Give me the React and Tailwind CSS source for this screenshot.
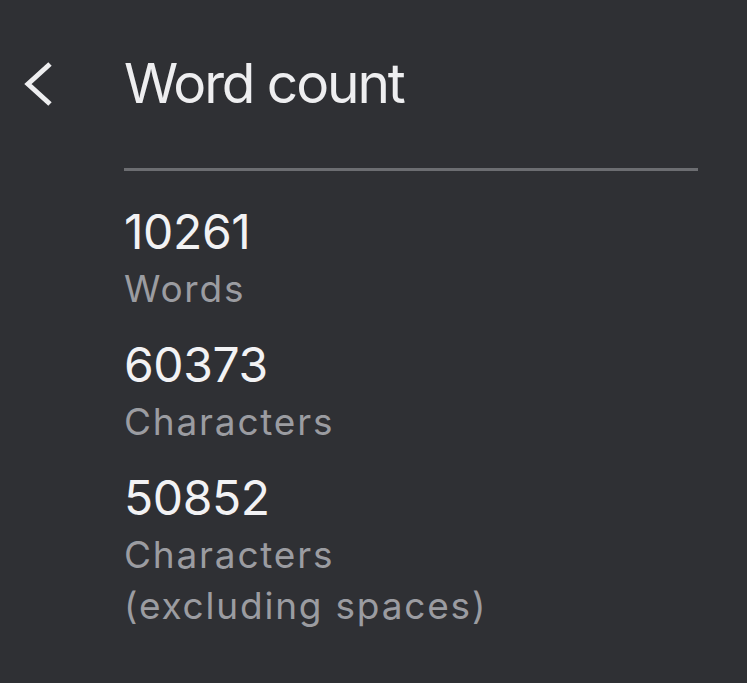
export default function App() {
  const rows = [
    { n: "10261", l: ["Words"] },
    { n: "60373", l: ["Characters"] },
    { n: "50852", l: ["Characters", "(excluding spaces)"] },
  ];
  return (
    <div className="w-[747px] h-[683px] bg-[#2f3034] flex" style={{ fontFamily: "Inter, Roboto, sans-serif" }}>
      <div className="w-[124px] shrink-0 pt-[60px] pl-[22px]">
        <svg width="34" height="48" viewBox="0 0 34 48" fill="none">
          <path d="M28 4 L6 24 L28 44" stroke="#eeeef0" strokeWidth="5" strokeLinecap="butt" strokeLinejoin="miter" />
        </svg>
      </div>
      <div className="flex-1 pr-[49px]">
        <div className="h-[171px] border-b-[3px] border-[#6c6d71] pt-[51px]">
          <div className="text-[55px] leading-[64px] text-[#eeeef0] tracking-[-2.1px]">Word count</div>
        </div>
        <div className="pt-[32px] flex flex-col">
          {rows.map((r) => (
            <div key={r.n} className="flex flex-col mb-[22px]">
              <div className="text-[48px] leading-[58px] text-[#f2f2f4] tracking-[-0.4px] mb-[2px]">{r.n}</div>
              {r.l.map((t) => (
                <div key={t} className="text-[37px] leading-[51px] text-[#9b9ca1] tracking-[1.8px]">{t}</div>
              ))}
            </div>
          ))}
        </div>
      </div>
    </div>
  );
}
